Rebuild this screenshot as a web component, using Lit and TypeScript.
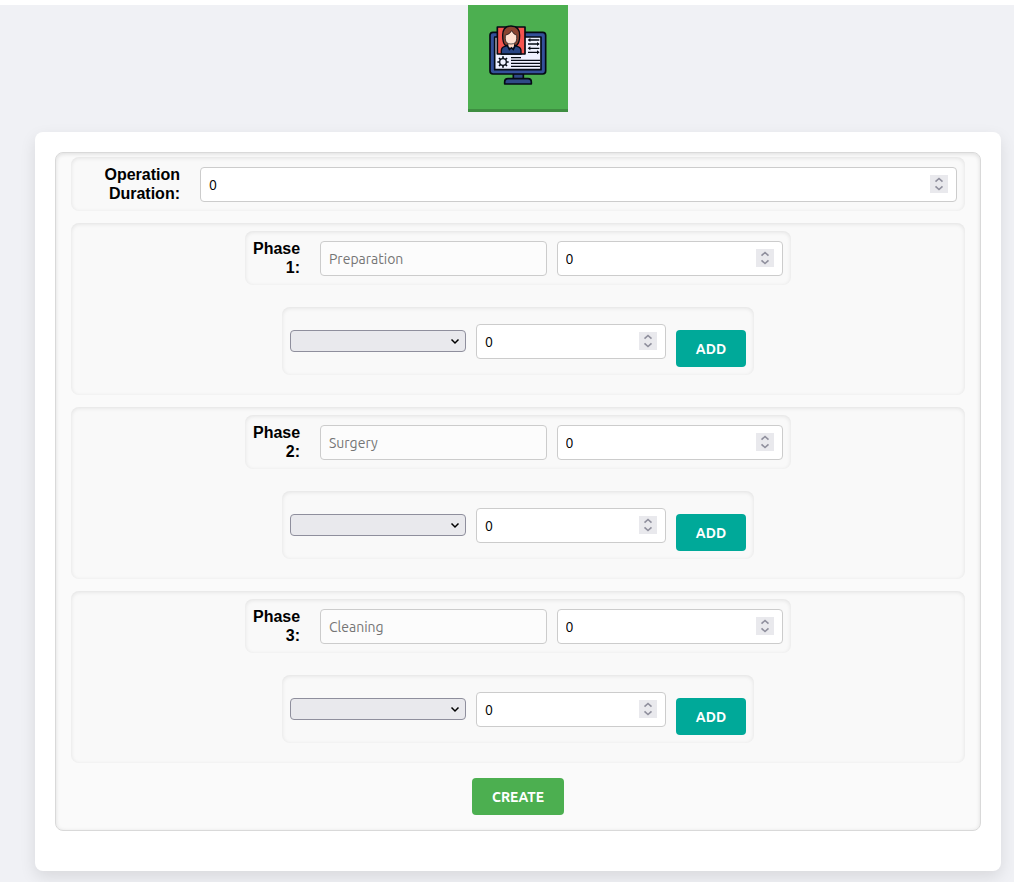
import { LitElement, html, css } from "lit";
import { customElement, property } from "lit/decorators.js";

const controls = css`
  * {
    box-sizing: border-box;
  }
  .field {
    width: 100%;
    height: 35px;
    margin: 0;
    padding: 2px 8px 0;
    border: 1px solid #ccc;
    border-radius: 4px;
    background: #fff;
    color: #000;
    font: 14px/20px Ubuntu, "Noto Sans", sans-serif;
    appearance: textfield;
  }
  .field::-webkit-inner-spin-button,
  .field::-webkit-outer-spin-button {
    appearance: none;
    margin: 0;
  }
  .field::placeholder {
    color: #757575;
    opacity: 1;
  }
  .field[readonly] {
    background: #fcfcfc;
  }
`;

@customElement("number-field")
class NumberField extends LitElement {
  @property() label = "";

  static styles = [
    controls,
    css`
      :host {
        display: block;
        position: relative;
        min-width: 0;
      }
      .steps {
        position: absolute;
        right: 9px;
        top: 8px;
        pointer-events: none;
      }
    `,
  ];

  render() {
    return html`<input class="field" type="number" value="0" aria-label=${this.label} />
      <svg class="steps" width="18" height="18" viewBox="0 0 18 18" aria-hidden="true">
        <rect width="18" height="18" fill="#e9e9ed" />
        <path d="M5.500 6.700 9 3.500l3.500 3.200M5.500 11.300 9 14.500l3.500-3.200" fill="none" stroke="#8f8f9d" stroke-width="1.600" />
      </svg>`;
  }
}

@customElement("app-root")
class AppRoot extends LitElement {
  static styles = [
    controls,
    css`
      :host {
        display: block;
        padding-top: 5px;
        background: #fff;
        font: 16px/19px "Liberation Sans", Arial, sans-serif;
        color: #000;
      }
      .page {
        min-height: calc(100vh - 5px);
        padding: 0 13px 11px 35px;
        background: #f0f1f5;
        display: flex;
        flex-direction: column;
        align-items: center;
        gap: 20px;
      }
      .tile {
        display: block;
        width: 100px;
        padding: 15px 16px 19px;
        background: #4caf50;
        border-bottom: 3px solid #3e8e41;
      }
      .tile svg {
        display: block;
      }
      .card {
        width: 100%;
        padding: 20px 20px 40px;
        border-radius: 8px;
        background: #fff;
        box-shadow: 0 6px 16px rgba(0, 0, 0, 0.1);
      }
      .form {
        display: flex;
        flex-direction: column;
        align-items: center;
        gap: 12px;
        padding: 4px 15px 15px;
        border: 1px solid #d9d9d9;
        border-radius: 8px;
        background: #fafafa;
        box-shadow: inset 0 1px 4px rgba(0, 0, 0, 0.12);
      }
      .box {
        border-radius: 8px;
        background: #f9f9f9;
        box-shadow: inset 0 1px 4px rgba(0, 0, 0, 0.1);
        max-width: 100%;
      }
      .row {
        display: flex;
        align-items: center;
        gap: 10px;
        padding: 8px;
      }
      .row > number-field,
      .row > .name {
        flex: 1 1 0;
        min-width: 0;
      }
      .duration {
        width: 100%;
        height: 54px;
      }
      .label {
        margin-right: 10px;
        font-weight: bold;
        text-align: right;
      }
      .duration .label {
        width: 101px;
      }
      .phase {
        width: 100%;
        display: flex;
        flex-direction: column;
        align-items: center;
        gap: 22px;
        padding: 8px 8px 20px;
      }
      .heading {
        width: 546px;
        height: 54px;
      }
      .heading .label {
        width: 47px;
      }
      .equipment {
        width: 472px;
        height: 68px;
      }
      .picker {
        position: relative;
        flex: 0 1 176px;
      }
      .choice {
        display: block;
        width: 100%;
        height: 22px;
        padding: 0 20px 0 4px;
        border: 1px solid #8f8f9d;
        border-radius: 4px;
        background: #e9e9ed;
        appearance: none;
      }
      .picker svg {
        position: absolute;
        right: 6px;
        top: 7px;
        pointer-events: none;
      }
      .button {
        height: 37px;
        padding: 0 19px;
        border: 0;
        border-radius: 4px;
        color: #fff;
        font: bold 14px/20px Ubuntu, "Noto Sans", sans-serif;
      }
      .add {
        align-self: flex-end;
        width: 70px;
        background: #00a999;
      }
      .create {
        width: 92px;
        margin-top: 3px;
        background: #4caf50;
      }
    `,
  ];

  private icon() {
    return html`<svg width="68" height="70" viewBox="0 0 204 210" aria-hidden="true">
      <g stroke="#050a14" stroke-width="5" stroke-linejoin="round">
        <path d="M88 160h30v17H88z" fill="#2f4a86" />
        <path d="M72 176h60q10 0 10 10v6H62v-6q0-10 10-10z" fill="#2f4a86" />
        <rect x="18" y="37" width="167" height="125" rx="9" fill="#34509a" />
        <rect x="32" y="51" width="139" height="98" fill="#eff1ff" />
        <rect x="40" y="21" width="83" height="81" fill="#f4544f" />
      </g>
      <path d="M81 18c-19 0-25 12-25 28 0 15 2 26 8 30h34c7-5 9-16 9-30 0-16-7-28-26-28z" fill="#8a4431" stroke="#050a14" stroke-width="4" />
      <path d="M52 102V92q0-10 11-13l11-4h14l11 4q12 3 12 13v10z" fill="#284484" stroke="#050a14" stroke-width="4" />
      <path d="M73 66h17v13l-8 7-9-7z" fill="#ffd5bf" />
      <path d="M64 46q14-3 19-14 5 11 15 14v10q0 16-17 16T64 56z" fill="#ffe0d0" stroke="#050a14" stroke-width="2" />
      <path d="m70 77 6 12 6-6 6 6 6-12" fill="none" stroke="#050a14" stroke-width="4" />
      <g fill="none" stroke="#050a14" stroke-width="4">
        <path d="M135 60h31M132 72h31M135 85h31M132 97h31" />
        <path d="M81 113h30M81 121h87M81 130h87M81 139h87" stroke-width="3.500" />
        <circle cx="57" cy="126" r="10" stroke-width="4" />
        <path d="M57 109v6M57 137v6M40 126h6M68 126h6M45 114l4.500 4.500M64.500 133.500l4.500 4.500M45 138l4.500-4.500M64.500 118.500l4.500-4.500" stroke-width="5" />
      </g>
      <path d="m131 60 8-6v12zM167 72l-8-6v12zM131 85l8-6v12zM167 97l-8-6v12z" fill="#050a14" />
    </svg>`;
  }

  private phase(name: string, n: number) {
    return html`<section class="box phase">
      <div class="box row heading">
        <label class="label" for="phase-${n}">Phase ${n}:</label>
        <div class="name">
          <input class="field" id="phase-${n}" type="text" placeholder=${name} readonly />
        </div>
        <number-field label="Phase ${n} duration"></number-field>
      </div>
      <div class="box row equipment">
        <div class="picker">
          <select class="choice" aria-label="Phase ${n} staff">
            <option></option>
          </select>
          <svg width="10" height="8" viewBox="0 0 10 8" aria-hidden="true">
            <path d="m1.500 2.500 3.500 3.500 3.500-3.500" fill="none" stroke="#000" stroke-width="1.500" />
          </svg>
        </div>
        <number-field label="Phase ${n} quantity"></number-field>
        <button class="button add" type="button">ADD</button>
      </div>
    </section>`;
  }

  render() {
    return html`<main class="page">
      <a class="tile" href="#" aria-label="Operation types">${this.icon()}</a>
      <div class="card">
        <form class="form">
          <div class="box row duration">
            <span class="label">Operation Duration:</span>
            <number-field label="Operation Duration"></number-field>
          </div>
          ${["Preparation", "Surgery", "Cleaning"].map((name, i) => this.phase(name, i + 1))}
          <button class="button create" type="button">CREATE</button>
        </form>
      </div>
    </main>`;
  }
}
